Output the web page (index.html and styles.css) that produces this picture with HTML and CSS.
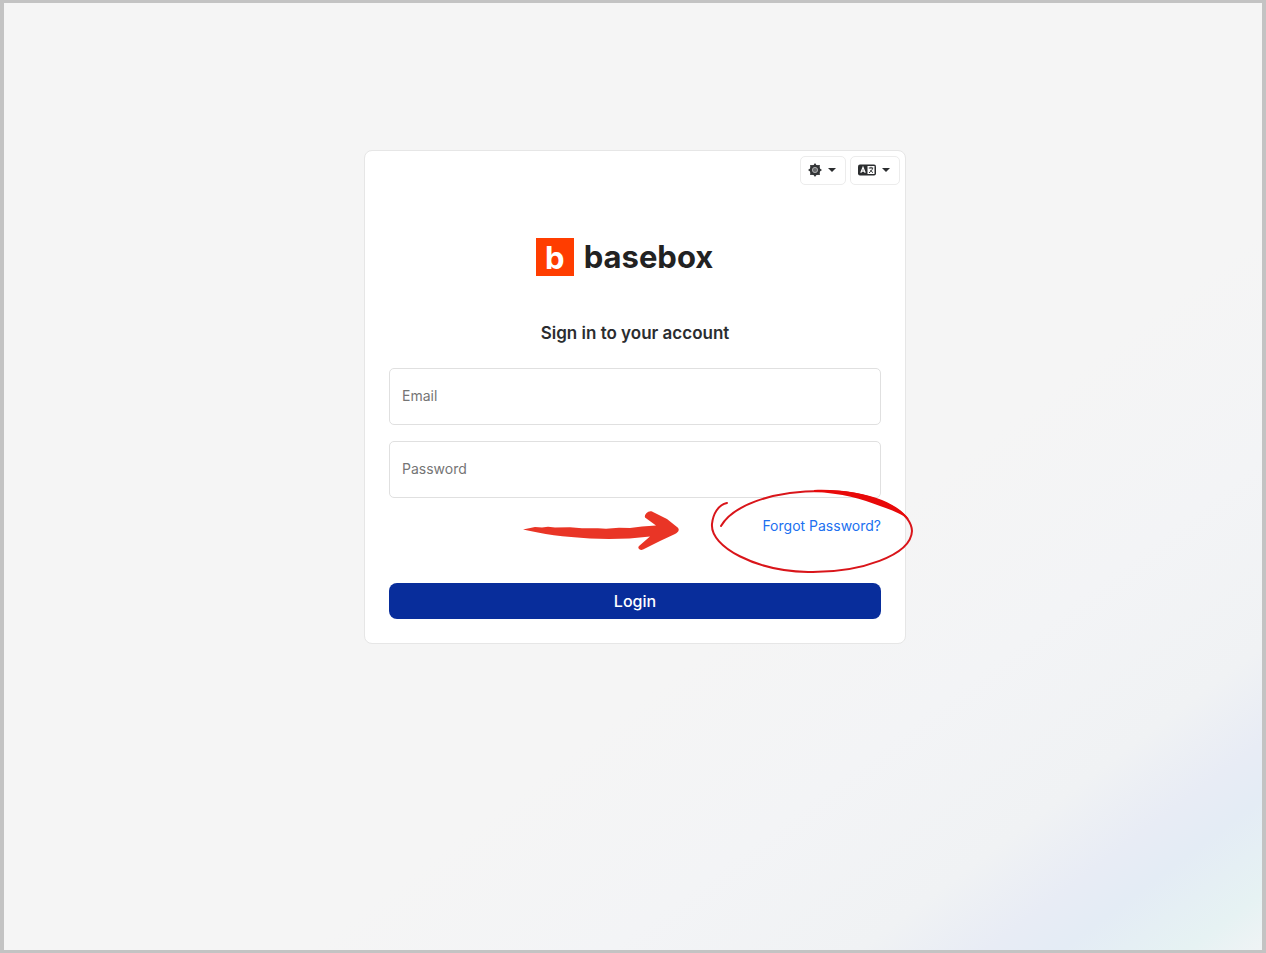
FILE: index.html
```
<!DOCTYPE html>
<html lang="en">
<head>
  <meta charset="utf-8">
  <meta name="viewport" content="width=device-width, initial-scale=1">
  <title>basebox - Sign in</title>
  <link rel="stylesheet" href="styles.css">
</head>
<body>
  <main class="page">
    <div class="card">

      <div class="toolbar">
        <button type="button" class="tool" aria-label="Theme">
          <svg width="14" height="14" viewBox="0 0 14 14">
            <path fill="#333537" d="M7 0L8.5 2.3 11.9 1.9 11.6 5.2 14 7 11.6 8.8 11.9 12.1 8.5 11.7 7 14 5.5 11.7 2.1 12.1 2.4 8.8 0 7 2.4 5.2 2.1 1.9 5.5 2.3z"/>
            <circle cx="7" cy="7" r="5.2" fill="#333537"/>
            <circle cx="7" cy="7" r="2.6" fill="#6a6c6e" stroke="#b5b6b7" stroke-width=".9"/>
          </svg>
          <svg class="caret" width="8" height="4" viewBox="0 0 8 4"><path d="M0 0h8L4 4z"/></svg>
        </button>
        <button type="button" class="tool" aria-label="Language">
          <svg width="18" height="12" viewBox="0 0 18 12">
            <rect y=".5" width="18" height="11" rx="2" fill="#2b2d2f"/>
            <path fill="#fff" d="M9.5 2h7v8h-7z"/>
            <path fill="none" stroke="#fff" stroke-width="1.2" d="M2.8 8.8L5 3.4 7.2 8.8M3.6 7.2h2.8"/>
            <path fill="none" stroke="#2b2d2f" stroke-width="1" d="M10.8 4h4.4M13 2.8V4M14.6 4.2c-.4 1.8-1.6 3.4-3.6 4.6M12.4 6.2c.6 1 1.4 1.8 2.6 2.4"/>
          </svg>
          <svg class="caret" width="8" height="4" viewBox="0 0 8 4"><path d="M0 0h8L4 4z"/></svg>
        </button>
      </div>

      <div class="logo">
        <span class="logo-mark">b</span>
        <span class="logo-name">basebox</span>
      </div>

      <form class="login-form">
        <h1 class="title">Sign in to your account</h1>
        <input class="field" type="email" name="email" placeholder="Email" aria-label="Email">
        <input class="field" type="password" name="password" placeholder="Password" aria-label="Password">

        <div class="forgot">
          <a href="#" class="forgot-link">Forgot Password?</a>

          <!-- arrow and ring pointing at the link -->
          <svg class="hint" width="400" height="94" viewBox="0 0 400 94" aria-hidden="true">
            <path fill="#e93526" d="M9 42.500L21 40 28 40.500 34 39.700 41 40.600 56 40.300 68 41.300 84 41.300 92 41.700 105 40.800 116 41 128 39.600 142 38.500L131 30.500C130 27 135 23 138 24.500L153 32 163 40C166 42 165 45 161 47L146 54 129 62.500C126 64 123 61 125 59L136 49.500C116 52 96 52.500 76 51.500C50 50 28 47 9 42.500z"/>
            <path fill="none" stroke="#d9151a" stroke-width="2" stroke-linecap="round" d="M207 39C218 20 254 4 308 4C357 4 397 23 398 44C397 68 347 86 294 85C242 84 196 60 198 37C199 27 204 18 213 16"/>
            <path fill="#e80909" d="M300 3C325 2 350 6 368 13C380 18 389 24 395 32C387 27 378 23 366 19C348 12 328 6 300 5z"/>
          </svg>
        </div>

        <button type="submit" class="login">Login</button>
      </form>

    </div>
  </main>
</body>
</html>
```

FILE: styles.css
```
* {
  box-sizing: border-box;
}

body {
  margin: 0;
  font-family: Inter, "Liberation Sans", sans-serif;
  color: #2b2d2f;
}

.page {
  display: flex;
  justify-content: center;
  align-items: flex-start;
  min-height: 100vh;
  padding: 147px 16px 16px 20px;
  border: solid #c3c3c3;
  border-width: 3px 4px;
  background: linear-gradient(143deg, #f5f5f5 62%, #f3f4f6 74%, #f0f2f4 84%, #e8ecf5 89%, #e4ecf5 92%, #e6f2f3 97%, #eff3f5 100%);
}

.card {
  width: 100%;
  max-width: 542px;
  border: 1px solid #e6e6e6;
  border-radius: 8px;
  background: #fff;
}

/* top buttons */
.toolbar {
  display: flex;
  justify-content: flex-end;
  gap: 4px;
  padding: 5px 5px 0;
}

.tool {
  display: flex;
  align-items: center;
  gap: 6px;
  height: 29px;
  padding: 0 9px 2px 7px;
  border: 1px solid #ececec;
  border-radius: 5px;
  background: #fff;
  cursor: pointer;
}

.caret {
  fill: #2b2d2f;
}

/* logo */
.logo {
  display: flex;
  justify-content: center;
  align-items: center;
  gap: 10px;
  margin-top: 52px;
  padding-right: 21px;
  font-size: 31px;
  font-weight: 700;
  line-height: 40px;
  color: #222;
}

.logo-mark {
  width: 38px;
  height: 38px;
  background: #ff3d00;
  color: #fff;
  text-align: center;
}

/* form */
.login-form {
  display: flex;
  flex-direction: column;
  padding: 43px 24px 24px;
}

.title {
  margin: 0 0 22px;
  font-size: 17px;
  font-weight: 600;
  line-height: 26px;
  text-align: center;
}

.field {
  width: 100%;
  height: 57px;
  margin-bottom: 16px;
  padding: 0 12px 2px;
  border: 1px solid #e0e0e0;
  border-radius: 5px;
  background: #fff;
  font: 400 14px/20px Inter, "Liberation Sans", sans-serif;
}

.field::placeholder {
  color: #757575;
  opacity: 1;
}

.forgot {
  position: relative;
  display: flex;
  justify-content: flex-end;
  height: 69px;
}

.forgot-link {
  font-size: 14px;
  font-weight: 400;
  line-height: 24px;
  color: #2070f0;
  text-decoration: none;
}

.hint {
  position: absolute;
  top: -27px;
  right: -33px;
  pointer-events: none;
}

.login {
  height: 36px;
  border: 0;
  border-radius: 8px;
  background: #082d9b;
  color: #fff;
  font: 500 16px/24px Inter, "Liberation Sans", sans-serif;
  cursor: pointer;
}
```
